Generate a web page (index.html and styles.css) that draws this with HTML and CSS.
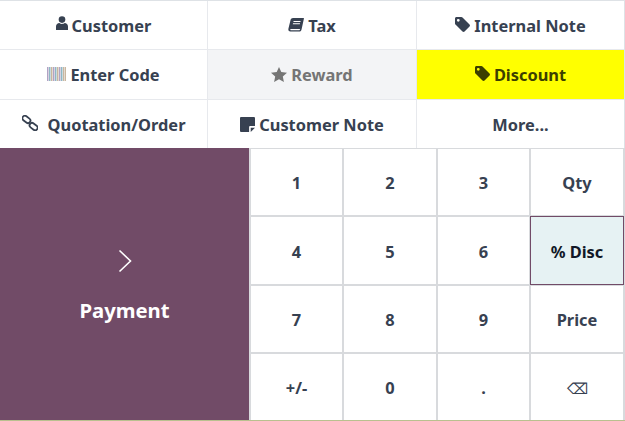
FILE: index.html
```html
<!DOCTYPE html>
<html lang="en">
<head>
<meta charset="utf-8">
<title>Point of Sale</title>
<link rel="stylesheet" href="styles.css">
</head>
<body>
<main class="pad">
  <section class="controls">
    <button class="ctl"><svg class="ico ico-user" viewBox="0 0 12 14"><circle cx="6" cy="3.600" r="3.300"/><path d="M0 14V10.600C0 8.600 1.600 7.100 3.400 7.100 4.200 7.800 5 8 6 8S7.800 7.800 8.600 7.100C10.400 7.100 12 8.600 12 10.600V14Z"/></svg><span>Customer</span></button>
    <button class="ctl"><svg class="ico ico-book" viewBox="0 0 16 14"><path d="M5 0H15.400C15.900 0 16 .4 15.900 .8L13.600 11.200C13.300 12.500 12.600 13.600 11 13.600H2.400C1 13.600 0 12.600 .4 10.800L2.600 1.800C2.900 .7 3.800 0 5 0ZM5.600 3 5.400 4H12.400L12.600 3ZM5 5.300 4.800 6.300H11.800L12 5.300ZM2.400 11C2.100 11.900 2.500 12.300 3.100 12.300H11.500L12.200 11Z" fill-rule="evenodd"/></svg><span>Tax</span></button>
    <button class="ctl"><svg class="ico ico-tag" viewBox="0 0 16 16"><path d="M0 1.600V6.800C0 7.300 .2 7.700 .5 8L8 15.500C8.600 16.100 9.600 16.100 10.200 15.500L15.500 10.200C16.100 9.600 16.100 8.600 15.500 8L8 .5C7.700 .2 7.300 0 6.800 0H1.600C.7 0 0 .7 0 1.600ZM3.500 2A1.500 1.500 0 1 1 3.500 5 1.500 1.500 0 0 1 3.500 2Z" fill-rule="evenodd"/></svg><span>Internal Note</span></button>

    <button class="ctl"><svg class="ico ico-barcode" viewBox="0 0 19 14"><path class="bar-a" d="M0 0H1.500V14H0ZM6 0H7.500V14H6ZM12 0H13.500V14H12Z"/><path class="bar-b" d="M2 0H3.500V14H2ZM8 0H9.500V14H8ZM14 0H15.500V14H14Z"/><path class="bar-c" d="M4 0H5.500V14H4ZM10 0H11.500V14H10ZM16 0H17.500V14H16ZM18 0H19V14H18Z"/></svg><span>Enter Code</span></button>
    <button class="ctl ctl-reward"><svg class="ico ico-star" viewBox="0 0 16 15"><path d="M8 0 10.300 5 16 5.700 11.800 9.500 12.900 15 8 12.300 3.100 15 4.200 9.500 0 5.700 5.700 5Z"/></svg><span>Reward</span></button>
    <button class="ctl ctl-discount"><svg class="ico ico-tag" viewBox="0 0 16 16"><path d="M0 1.600V6.800C0 7.300 .2 7.700 .5 8L8 15.500C8.600 16.100 9.600 16.100 10.200 15.500L15.500 10.200C16.100 9.600 16.100 8.600 15.500 8L8 .5C7.700 .2 7.300 0 6.800 0H1.600C.7 0 0 .7 0 1.600ZM3.500 2A1.500 1.500 0 1 1 3.500 5 1.500 1.500 0 0 1 3.500 2Z" fill-rule="evenodd"/></svg><span>Discount</span></button>

    <button class="ctl"><svg class="ico ico-link" viewBox="0 0 16 16"><rect x="0" y="1.900" width="8.800" height="5" rx="2.500" transform="rotate(38 4.400 4.400)"/><rect x="7.200" y="9.100" width="8.800" height="5" rx="2.500" transform="rotate(38 11.600 11.600)"/></svg><span>Quotation/Order</span></button>
    <button class="ctl"><svg class="ico ico-note" viewBox="0 0 14 14"><path d="M1.200 0H12.800C13.500 0 14 .5 14 1.200V8.500H9.700C9 8.500 8.500 9 8.500 9.700V14H1.200C.5 14 0 13.500 0 12.800V1.200C0 .5 .5 0 1.200 0ZM10 10H14L10 14Z"/></svg><span>Customer Note</span></button>
    <button class="ctl"><span>More...</span></button>
  </section>

  <section class="lower">
    <button class="pay">
      <svg class="chev" viewBox="0 0 14 24"><path d="M1.500 1.500 12.500 12 1.500 22.500"/></svg>
      <span>Payment</span>
    </button>
    <div class="keys">
      <button class="key">1</button><button class="key">2</button><button class="key">3</button><button class="key">Qty</button>
      <button class="key">4</button><button class="key">5</button><button class="key">6</button><button class="key key-on">% Disc</button>
      <button class="key">7</button><button class="key">8</button><button class="key">9</button><button class="key">Price</button>
      <button class="key">+/-</button><button class="key">0</button><button class="key">.</button><button class="key key-back">⌫</button>
    </div>
  </section>
</main>
</body>
</html>
```
FILE: styles.css
```css
* { box-sizing: border-box; }
html, body { margin: 0; padding: 0; background: #fff; }
.pad {
  width: 625px;
  height: 421px;
  display: flex;
  flex-direction: column;
  font-family: "Noto Sans", sans-serif;
  font-weight: 700;
  font-size: 16.4px;
  color: #374151;
  border-bottom: 1px solid #b9c08f;
}
button { font: inherit; color: inherit; margin: 0; padding: 0; border: 0; background: #fff; }

.controls {
  height: 148px;
  flex: none;
  display: grid;
  grid-template-columns: 208px 209px 207px;
  grid-template-rows: 49px 50px 48px;
  border-top: 1px solid #dee2e6;
  border-right: 1px solid #dee2e6;
}
.ctl {
  display: flex;
  align-items: center;
  justify-content: center;
  gap: 4px;
  border-right: 1px solid #e7e9ed;
  border-bottom: 1px solid #e7e9ed;
  white-space: nowrap;
}
.ctl:nth-child(-n+3), .ctl:nth-child(n+7) { padding-top: 1px; }
.ctl:nth-child(n+7) { border-bottom: 0; }
.ctl:nth-child(3n) { border-right: 0; }
.ctl:nth-child(7) { gap: 10px; }
.ctl-reward { background: #f3f4f6; color: #757575; }
.ctl-discount { background: #ffff00; color: #3c3f00; }
.ico { display: block; fill: currentColor; flex: none; }
.ico-user { width: 12px; height: 14px; margin-top: -5px; }
.ico-book { width: 16px; height: 14px; margin-top: -2px; }
.ico-tag { width: 15px; height: 15px; margin-top: -3px; }
.ico-star { width: 16px; height: 15px; margin-top: -1px; }
.ico-note { width: 15px; height: 15px; margin-top: 0; }
.ico-barcode { width: 19px; height: 14px; margin-top: -2px; }
.bar-a { fill: #b1a3c4; }
.bar-b { fill: #8fb7c4; }
.bar-c { fill: #c9b6a0; }
.ico-link { width: 16px; height: 16px; margin-top: -3px; fill: none; stroke: currentColor; stroke-width: 1.800; }

.lower {
  flex: 1;
  min-height: 0;
  display: grid;
  grid-template-columns: 249px 1fr;
}
.pay {
  background: #714b67;
  color: #fff;
  display: flex;
  flex-direction: column;
  align-items: center;
  justify-content: center;
  padding-top: 5px;
  font-size: 20.300px;
  font-weight: 700;
  gap: 23px;
}
.chev { width: 14px; height: 24px; fill: none; stroke: #fff; stroke-width: 1.600; }
.keys {
  display: grid;
  grid-template-columns: 91px 92px 91px 92px;
  grid-template-rows: 66px 67px 66px 66px;
  gap: 2px;
  padding: 1px 2px 0 2px;
  background: #d8dadd;
}
.key { background: #fff; padding-top: 1px; }
.key-on { background: #e6f2f3; color: #111827; box-shadow: 0 0 0 1px #714b67; }
.key-back { font-weight: 400; font-size: 15px; }
```
